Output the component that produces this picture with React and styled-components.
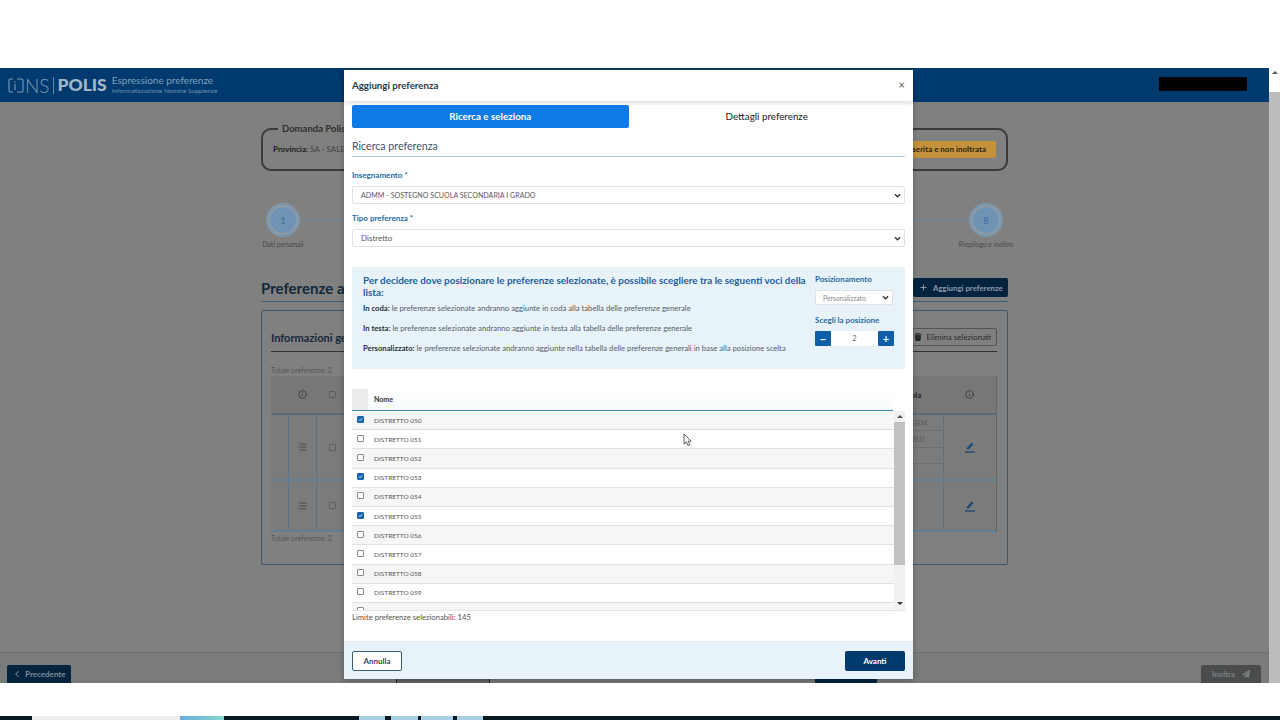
import styled, { createGlobalStyle } from "styled-components";
import { Plus, ChevronLeft, Menu, Info } from "lucide-react";
import { FaTrash, FaPaperPlane } from "react-icons/fa";

const FONT = `"Lato", "Liberation Sans", sans-serif`;

const CHEVRON = `url("data:image/svg+xml,%3Csvg xmlns='http://www.w3.org/2000/svg' viewBox='0 0 8 5'%3E%3Cpath d='M1 1l3 3 3-3' fill='none' stroke='%23333' stroke-width='1.5'/%3E%3C/svg%3E")`;
const TICK = `url("data:image/svg+xml,%3Csvg xmlns='http://www.w3.org/2000/svg' viewBox='0 0 8 8'%3E%3Cpath d='M1.5 4.2l1.8 1.8 3.4-3.8' fill='none' stroke='%23fff' stroke-width='1.3'/%3E%3C/svg%3E")`;

const GlobalStyle = createGlobalStyle`
  html, body {
    margin: 0;
    height: 100%;
    overflow: hidden;
    background: #ffffff;
    font-family: ${FONT};
  }
  * {
    box-sizing: border-box;
  }
  select, input, button {
    font-family: ${FONT};
  }
`;

const districts = ["050", "051", "052", "053", "054", "055", "056", "057", "058", "059", "060"];
const checkedDistricts = ["050", "053", "055"];

const steps = [
  { n: 1, label: "Dati personali" },
  { n: 2 },
  { n: 3 },
  { n: 4 },
  { n: 5 },
  { n: 6 },
  { n: 7 },
  { n: 8, label: "Riepilogo e inoltro" },
];

const notes = [
  { title: "In coda:", text: "le preferenze selezionate andranno aggiunte in coda alla tabella delle preferenze generale" },
  { title: "In testa:", text: "le preferenze selezionate andranno aggiunte in testa alla tabella delle preferenze generale" },
  {
    title: "Personalizzato:",
    text: "le preferenze selezionate andranno aggiunte nella tabella delle preferenze generali in base alla posizione scelta",
  },
];

const LogoMark = () => (
  <svg width="16" height="15" viewBox="0 0 16 15" fill="none" stroke="#7f9db8" strokeWidth="1.1">
    <path d="M5 1H2.5A1.5 1.5 0 0 0 1 2.5v10A1.5 1.5 0 0 0 2.5 14H5" />
    <path d="M9 1h4.5A1.5 1.5 0 0 1 15 2.5v10a1.5 1.5 0 0 1-1.5 1.5H9" />
    <path d="M7 6v6M7 3.2v1.2" />
  </svg>
);

const EditIcon = () => (
  <svg width="12" height="12" viewBox="0 0 12 12" fill="none" stroke="#1d4a73">
    <path d="M3.2 8.2L8.6 2.4" strokeWidth="2.4" />
    <path d="M1 11h10" strokeWidth="1.4" />
  </svg>
);

const Cursor = () => (
  <CursorMark width="9" height="14" viewBox="0 0 9 14">
    <path d="M1 1v10l2.4-2.2L5 12.6l1.8-.8-1.6-3.6h3z" fill="#ffffff" stroke="#333333" strokeWidth="0.8" />
  </CursorMark>
);

const App = () => {
  return (
    <Page>
      <GlobalStyle />
      <TopGap />
      <Frame>
        <Main>
          <Header>
            <Brand>
              <LogoMark />
              <BrandNs>NS</BrandNs>
              <BrandDivider />
              <BrandPolis>POLIS</BrandPolis>
              <BrandText>
                <BrandTitle>Espressione preferenze</BrandTitle>
                <BrandSub>Informatizzazione Nomine Supplenze</BrandSub>
              </BrandText>
            </Brand>
            <Redacted />
          </Header>

          <Content>
            <Summary>
              <SummaryLegend>Domanda Polis</SummaryLegend>
              <SummaryRow>
                <span>
                  <strong>Provincia:</strong> SA - SALERNO
                </span>
                <StatusChip>Domanda inserita e non inoltrata</StatusChip>
              </SummaryRow>
            </Summary>

            <Stepper>
              {steps.map((step, index) => (
                <StepGroup key={step.n} $last={index === steps.length - 1}>
                  <Step>
                    <StepCircle>{step.n}</StepCircle>
                    <StepLabel>{step.label}</StepLabel>
                  </Step>
                  {index < steps.length - 1 && <StepLine />}
                </StepGroup>
              ))}
            </Stepper>

            <SectionRow>
              <SectionTitle>Preferenze aggiunte</SectionTitle>
              <AddButton>
                <Plus size={9} strokeWidth={2.5} />
                Aggiungi preferenze
              </AddButton>
            </SectionRow>

            <Card>
              <CardHead>
                <CardTitle>Informazioni generali</CardTitle>
                <DeleteButton>
                  <FaTrash size={8} />
                  Elimina selezionati
                </DeleteButton>
              </CardHead>
              <TotalText $gap={12}>Totale preferenze: 2</TotalText>
              <BgTable>
                <BgHead>
                  <span />
                  <BgHeadCell>
                    <Info size={9} color="#333333" />
                  </BgHeadCell>
                  <BgHeadCell>
                    <BgCheck />
                  </BgHeadCell>
                  <span />
                  <BgHeadText>Scuola</BgHeadText>
                  <BgHeadCell>
                    <Info size={9} color="#333333" />
                  </BgHeadCell>
                </BgHead>
                <BgRow $height={66}>
                  <span />
                  <BgCell>
                    <Menu size={10} color="#444444" />
                  </BgCell>
                  <BgCell>
                    <BgCheck />
                  </BgCell>
                  <span />
                  <BgSubRows>
                    <BgSubRow>ERM</BgSubRow>
                    <BgSubRow>RUJ</BgSubRow>
                    <BgSubRow />
                    <BgSubRow />
                  </BgSubRows>
                  <BgCell>
                    <EditIcon />
                  </BgCell>
                </BgRow>
                <BgRow $height={51}>
                  <span />
                  <BgCell>
                    <Menu size={10} color="#444444" />
                  </BgCell>
                  <BgCell>
                    <BgCheck />
                  </BgCell>
                  <span />
                  <span />
                  <BgCell>
                    <EditIcon />
                  </BgCell>
                </BgRow>
              </BgTable>
              <TotalText $gap={0}>Totale preferenze: 2</TotalText>
            </Card>
          </Content>

          <Footer>
            <BackButton>
              <ChevronLeft size={10} strokeWidth={2.5} />
              Precedente
            </BackButton>
            <FooterCenter>
              <GhostButton />
              <DarkButton />
            </FooterCenter>
            <SendButton>
              Inoltra
              <FaPaperPlane size={8} />
            </SendButton>
          </Footer>
        </Main>

        <ScrollBar $width={11}>
          <ScrollArrow $height={24} $bg="#ffffff" />
          <ScrollTrack $bg="#bcbcbc" />
        </ScrollBar>

        <Modal>
          <ModalHeader>
            <ModalTitle>Aggiungi preferenza</ModalTitle>
            <CloseButton>×</CloseButton>
          </ModalHeader>

          <ModalBody>
            <Tabs>
              <Tab $active>Ricerca e seleziona</Tab>
              <Tab>Dettagli preferenze</Tab>
            </Tabs>

            <FormTitle>Ricerca preferenza</FormTitle>

            <FieldLabel>Insegnamento *</FieldLabel>
            <Select defaultValue="admm" $size={7.1}>
              <option value="admm">ADMM - SOSTEGNO SCUOLA SECONDARIA I GRADO</option>
            </Select>
            <FieldLabel $gap={9}>Tipo preferenza *</FieldLabel>
            <Select defaultValue="distretto" $size={8}>
              <option value="distretto">Distretto</option>
            </Select>

            <InfoBox>
              <InfoText>
                <InfoTitle>
                  Per decidere dove posizionare le preferenze selezionate, è possibile scegliere tra le seguenti voci
                  della lista:
                </InfoTitle>
                {notes.map((note) => (
                  <InfoNote key={note.title}>
                    <strong>{note.title}</strong> {note.text}
                  </InfoNote>
                ))}
              </InfoText>
              <InfoSide>
                <SideLabel>Posizionamento</SideLabel>
                <SideSelect defaultValue="personalizzato">
                  <option value="personalizzato">Personalizzato</option>
                </SideSelect>
                <SideLabel $gap={10}>Scegli la posizione</SideLabel>
                <Counter>
                  <CounterButton>−</CounterButton>
                  <CounterValue>2</CounterValue>
                  <CounterButton>+</CounterButton>
                </Counter>
              </InfoSide>
            </InfoBox>

            <ListHead>
              <ListHeadCheck />
              <ListHeadName>Nome</ListHeadName>
            </ListHead>
            <ListWrap>
              <List>
                {districts.map((code) => (
                  <ListRow key={code}>
                    <RowCheck type="checkbox" readOnly checked={checkedDistricts.includes(code)} />
                    <RowName>DISTRETTO {code}</RowName>
                  </ListRow>
                ))}
              </List>
              <ScrollBar $width={11}>
                <ScrollArrow $height={11} $bg="#f1f1f1" />
                <ScrollTrack $bg="#f1f1f1">
                  <ScrollThumb $height={143} />
                </ScrollTrack>
                <ScrollArrow $height={13} $bg="#f1f1f1" $down />
              </ScrollBar>
            </ListWrap>
            <LimitText>Limite preferenze selezionabili: 145</LimitText>
          </ModalBody>

          <ModalFooter>
            <CancelButton>Annulla</CancelButton>
            <NextButton>Avanti</NextButton>
          </ModalFooter>
          <Cursor />
        </Modal>
      </Frame>
      <Taskbar>
        <TaskSearch />
        <TaskAccent />
        <TaskIcon $width={26} $left={135} />
        <TaskIcon $width={27} $left={6} />
        <TaskIcon $width={32} $left={3} />
        <TaskIcon $width={26} $left={4} />
      </Taskbar>
    </Page>
  );
};

const Page = styled.div`
  width: 1280px;
  height: 720px;
  display: flex;
  flex-direction: column;
  background: #ffffff;
  overflow: hidden;
`;

const TopGap = styled.div`
  height: 68px;
  flex: none;
`;

const Frame = styled.div`
  position: relative;
  height: 615px;
  flex: none;
  display: flex;
  background: #808080;
  overflow: hidden;
`;

const Main = styled.div`
  flex: 1;
  min-width: 0;
  display: flex;
  flex-direction: column;
`;

const Header = styled.header`
  height: 34px;
  flex: none;
  display: flex;
  align-items: center;
  justify-content: space-between;
  padding: 0 22px 0 8px;
  background: #003a6e;
`;

const Brand = styled.div`
  display: flex;
  align-items: center;
`;

const BrandNs = styled.span`
  margin-left: 1px;
  font-size: 19px;
  font-weight: 300;
  line-height: 1;
  color: #7f9db8;
`;

const BrandDivider = styled.span`
  width: 1px;
  height: 17px;
  margin: 0 4px 0 3px;
  background: #5f85a6;
`;

const BrandPolis = styled.span`
  font-size: 17.5px;
  font-weight: 900;
  line-height: 1;
  color: #a3b7c8;
`;

const BrandText = styled.div`
  display: flex;
  flex-direction: column;
  margin-left: 5px;
  margin-bottom: 1px;
`;

const BrandTitle = styled.span`
  font-size: 10px;
  line-height: 12px;
  color: #7fa0bb;
`;

const BrandSub = styled.span`
  font-size: 6.5px;
  line-height: 9px;
  color: #6f92af;
`;

const Redacted = styled.div`
  width: 88px;
  height: 14px;
  margin-bottom: 2px;
  background: #000000;
`;

const Content = styled.main`
  flex: 1;
  min-height: 0;
  width: 747px;
  margin: 0 auto;
  padding-top: 21px;
`;

const Summary = styled.fieldset`
  margin: 0;
  padding: 0 10px;
  height: 48px;
  border: 2px solid #3a3a3a;
  border-radius: 10px;
`;

const SummaryLegend = styled.legend`
  margin-left: 5px;
  padding: 0 4px;
  font-size: 9.5px;
  font-weight: 700;
  line-height: 11px;
  color: #2f2f2f;
`;

const SummaryRow = styled.div`
  display: flex;
  align-items: center;
  justify-content: space-between;
  height: 30px;
  font-size: 8px;
  color: #444444;

  strong {
    color: #1c1c1c;
  }
`;

const StatusChip = styled.span`
  display: flex;
  align-items: center;
  height: 17px;
  padding: 0 10px;
  font-size: 8px;
  font-weight: 700;
  color: #2d2410;
  background: #c3923b;
  border-radius: 2px;
`;

const Stepper = styled.div`
  display: flex;
  margin-top: 32px;
`;

const StepGroup = styled.div`
  display: flex;
  flex: ${(props) => (props.$last ? "none" : 1)};
`;

const Step = styled.div`
  width: 44px;
  flex: none;
  display: flex;
  flex-direction: column;
  align-items: center;
`;

const StepCircle = styled.div`
  width: 34px;
  height: 34px;
  display: flex;
  align-items: center;
  justify-content: center;
  font-size: 9px;
  color: #3e6f9c;
  background: #6f93b2;
  border: 2px solid #7f97ab;
  border-radius: 50%;
  box-shadow: inset 0 0 0 2px #8f9ca6;
`;

const StepLabel = styled.span`
  margin-top: 2px;
  font-size: 6.8px;
  line-height: 10px;
  white-space: nowrap;
  color: #4a4a4a;
`;

const StepLine = styled.div`
  flex: 1;
  height: 1px;
  margin: 17px -5px 0;
  background: #6c8aa3;
`;

const SectionRow = styled.div`
  display: flex;
  align-items: flex-start;
  justify-content: space-between;
  height: 24px;
  margin-top: 29px;
  border-bottom: 1px solid #3f5f78;
`;

const SectionTitle = styled.h2`
  margin: 0;
  font-size: 15px;
  font-weight: 700;
  line-height: 20px;
  color: #12283c;
`;

const AddButton = styled.button`
  display: flex;
  align-items: center;
  gap: 5px;
  width: 95px;
  height: 19px;
  padding: 0 0 0 6px;
  font-size: 7.8px;
  font-weight: 700;
  color: #8d9cab;
  background: #04233f;
  border: 0;
  border-radius: 2px;
`;

const Card = styled.section`
  height: 255px;
  margin-top: 8px;
  padding: 17px 10px 0 9px;
  border: 1px solid #3f5568;
  border-radius: 2px;
`;

const CardHead = styled.div`
  display: flex;
  align-items: center;
  justify-content: space-between;
  height: 24px;
  border-bottom: 1px solid #333333;
  padding-bottom: 5px;
`;

const CardTitle = styled.h3`
  margin: 0;
  font-size: 11px;
  font-weight: 700;
  color: #13283a;
`;

const DeleteButton = styled.button`
  display: flex;
  align-items: center;
  gap: 4px;
  height: 18px;
  padding: 0 5px;
  font-size: 8px;
  color: #2a2a2a;
  background: #808080;
  border: 1px solid #555555;
  border-radius: 2px;
`;

const TotalText = styled.div`
  height: 12px;
  margin-top: ${(props) => props.$gap}px;
  font-size: 7px;
  line-height: 12px;
  color: #555555;
`;

const BgTable = styled.div`
  border-right: 1px solid #666666;
`;

const BgHead = styled.div`
  display: grid;
  grid-template-columns: 17px 28px 32px 1fr 45px 53px;
  align-items: center;
  height: 39px;
  background: #777777;
  border-bottom: 2px solid #5b6d7b;
`;

const BgHeadCell = styled.div`
  display: flex;
  justify-content: center;
`;

const BgHeadText = styled.span`
  font-size: 8px;
  font-weight: 700;
  color: #222222;
`;

const BgRow = styled.div`
  display: grid;
  grid-template-columns: 17px 28px 32px 1fr 45px 53px;
  height: ${(props) => props.$height}px;
  background: #7b7b7b;
  border-bottom: 2px solid #5f7f96;
`;

const BgCell = styled.div`
  display: flex;
  align-items: center;
  justify-content: center;
  border-left: 1px solid #55738a;
`;

const BgCheck = styled.span`
  width: 7px;
  height: 7px;
  border: 1px solid #5e5e5e;
  border-radius: 1px;
`;

const BgSubRows = styled.div`
  display: flex;
  flex-direction: column;
`;

const BgSubRow = styled.div`
  flex: 1;
  display: flex;
  align-items: center;
  padding-left: 14px;
  font-size: 7px;
  color: #5a5a5a;
  border-bottom: 1px solid #6f6f6f;

  &:last-child {
    border-bottom: 0;
  }
`;

const Footer = styled.footer`
  height: 31px;
  flex: none;
  display: flex;
  justify-content: space-between;
  padding: 12px 8px 0 7px;
  background: #7a7b7b;
  border-top: 1px solid #6f7070;
`;

const BackButton = styled.button`
  display: flex;
  align-items: center;
  gap: 3px;
  width: 64px;
  height: 24px;
  padding: 0 0 6px 5px;
  font-size: 8px;
  font-weight: 700;
  color: #7f8c99;
  background: #04233f;
  border: 0;
  border-radius: 2px;
`;

const FooterCenter = styled.div`
  display: flex;
  gap: 325px;
`;

const GhostButton = styled.div`
  width: 94px;
  height: 24px;
  background: #666666;
  border: 1px solid #222222;
`;

const DarkButton = styled.div`
  width: 62px;
  height: 24px;
  background: #04233f;
`;

const SendButton = styled.button`
  display: flex;
  align-items: center;
  justify-content: center;
  gap: 7px;
  width: 60px;
  height: 24px;
  padding: 0 0 6px;
  font-size: 7.8px;
  font-weight: 700;
  color: #7e8282;
  background: #4a4c4d;
  border: 0;
  border-radius: 2px;
`;

const ScrollBar = styled.div`
  width: ${(props) => props.$width}px;
  flex: none;
  display: flex;
  flex-direction: column;
`;

const ScrollArrow = styled.div`
  height: ${(props) => props.$height}px;
  flex: none;
  display: flex;
  align-items: center;
  justify-content: center;
  background: ${(props) => props.$bg};

  &::before {
    content: "";
    border-left: 3px solid transparent;
    border-right: 3px solid transparent;
    border-bottom: ${(props) => (props.$down ? "0" : "3px solid #555555")};
    border-top: ${(props) => (props.$down ? "3px solid #333333" : "0")};
    margin-bottom: ${(props) => (props.$height > 20 ? "16px" : "0")};
  }
`;

const ScrollTrack = styled.div`
  flex: 1;
  min-height: 0;
  background: ${(props) => props.$bg};
`;

const ScrollThumb = styled.div`
  height: ${(props) => props.$height}px;
  background: #c1c1c1;
`;

const Modal = styled.div`
  position: absolute;
  top: 1px;
  left: 344px;
  width: 569px;
  height: 610px;
  display: flex;
  flex-direction: column;
  background: #ffffff;
  border-top: 1px solid #1c3d57;
  box-shadow: 0 2px 6px rgba(0, 0, 0, 0.25);
`;

const ModalHeader = styled.div`
  height: 31px;
  flex: none;
  display: flex;
  align-items: center;
  justify-content: space-between;
  padding: 0 8px 2px;
  box-shadow: 0 2px 5px rgba(0, 0, 0, 0.14);
`;

const ModalTitle = styled.h2`
  margin: 0;
  font-size: 9.7px;
  font-weight: 700;
  color: #25394a;
`;

const CloseButton = styled.span`
  font-size: 11px;
  line-height: 1;
  color: #555555;
`;

const ModalBody = styled.div`
  flex: 1;
  min-height: 0;
  padding: 4px 8px 0;
`;

const Tabs = styled.div`
  display: grid;
  grid-template-columns: 1fr 1fr;
  height: 23px;
`;

const Tab = styled.div`
  display: flex;
  align-items: center;
  justify-content: center;
  padding-bottom: 1px;
  font-size: 9.8px;
  font-weight: ${(props) => (props.$active ? 700 : 400)};
  color: ${(props) => (props.$active ? "#ffffff" : "#222222")};
  background: ${(props) => (props.$active ? "#0d7ae6" : "#ffffff")};
  border-radius: 2px;
`;

const FormTitle = styled.h3`
  height: 29px;
  margin: 0;
  padding-top: 11px;
  font-size: 10.6px;
  font-weight: 400;
  line-height: 14px;
  color: #3c5468;
  border-bottom: 1px solid #a9d3da;
`;

const FieldLabel = styled.label`
  display: block;
  height: 11px;
  margin-top: ${(props) => props.$gap || 13}px;
  margin-bottom: 5px;
  font-size: 8px;
  font-weight: 700;
  line-height: 11px;
  color: #1d6aa5;
`;

const Select = styled.select`
  display: block;
  width: 100%;
  height: 18px;
  padding: 0 8px;
  font-size: ${(props) => props.$size}px;
  color: #5a5a5a;
  appearance: none;
  background: #ffffff ${CHEVRON} no-repeat right 3px center / 7px 5px;
  border: 1px solid #e2e2e2;
  border-radius: 2px;
`;

const InfoBox = styled.div`
  display: flex;
  justify-content: space-between;
  height: 102px;
  margin-top: 20px;
  padding: 7px 11px 0;
  background: #e8f2f9;
`;

const InfoText = styled.div`
  width: 444px;
`;

const InfoTitle = styled.h4`
  margin: 0 0 5px;
  font-size: 9.9px;
  font-weight: 700;
  line-height: 12px;
  color: #1d5f9c;
`;

const InfoNote = styled.p`
  height: 20px;
  margin: 0;
  font-size: 7.7px;
  line-height: 11px;
  color: #55606a;

  strong {
    color: #27323c;
  }
`;

const InfoSide = styled.div`
  width: 79px;
`;

const SideLabel = styled.div`
  height: 11px;
  margin-top: ${(props) => props.$gap || 0}px;
  margin-bottom: 5px;
  font-size: 8px;
  font-weight: 700;
  line-height: 11px;
  color: #2a6aa0;
`;

const SideSelect = styled.select`
  display: block;
  width: 78px;
  height: 15px;
  padding: 0 7px;
  font-size: 6.8px;
  color: #8a8a8a;
  appearance: none;
  background: #ffffff ${CHEVRON} no-repeat right 3px center / 7px 5px;
  border: 1px solid #e2e2e2;
`;

const Counter = styled.div`
  display: flex;
  height: 15px;
`;

const CounterButton = styled.button`
  width: 16px;
  padding: 0;
  font-size: 11px;
  font-weight: 700;
  line-height: 1;
  color: #ffffff;
  background: #0f5fa8;
  border: 0;
  border-radius: 1px;
`;

const CounterValue = styled.div`
  flex: 1;
  display: flex;
  align-items: center;
  justify-content: center;
  font-size: 7.5px;
  color: #666666;
  background: #ffffff;
`;

const ListHead = styled.div`
  display: flex;
  width: 541px;
  height: 22px;
  margin-top: 20px;
  background: linear-gradient(#ffffff, #f7fafc);
  border-bottom: 1px solid #3d8ab5;
`;

const ListHeadCheck = styled.div`
  width: 16px;
  background: #ececec;
`;

const ListHeadName = styled.div`
  padding-left: 6px;
  font-size: 7px;
  font-weight: 700;
  line-height: 20px;
  color: #333333;
`;

const ListWrap = styled.div`
  display: flex;
  height: 200px;
  border-bottom: 1px solid #e5e5e5;
`;

const List = styled.div`
  flex: 1;
  min-width: 0;
  overflow: hidden;
`;

const ListRow = styled.label`
  display: flex;
  align-items: center;
  height: 19.2px;
  background: #ffffff;
  border-bottom: 1px solid #e0e0e0;

  &:nth-child(odd) {
    background: #f6f6f6;
  }
`;

const RowCheck = styled.input`
  width: 7px;
  height: 7px;
  margin: 0 0 2px 5px;
  appearance: none;
  background: #ffffff;
  border: 1px solid #8a8a8a;
  border-radius: 1px;

  &:checked {
    background: #1565b5 ${TICK} no-repeat center / 100%;
    border-color: #1565b5;
  }
`;

const RowName = styled.span`
  margin-left: 10px;
  font-size: 6.5px;
  color: #555555;
`;

const LimitText = styled.div`
  margin-top: 1px;
  font-size: 7.7px;
  line-height: 11px;
  color: #555555;
`;

const ModalFooter = styled.div`
  height: 38px;
  flex: none;
  display: flex;
  align-items: center;
  justify-content: space-between;
  padding: 0 8px;
  background: #e8f2f9;
  border-top: 1px solid #eeeeee;
`;

const CancelButton = styled.button`
  width: 50px;
  height: 20px;
  padding: 0;
  font-size: 8px;
  font-weight: 700;
  color: #3b4a55;
  background: #ffffff;
  border: 1px solid #3a5a70;
  border-radius: 2px;
`;

const NextButton = styled.button`
  width: 60px;
  height: 20px;
  padding: 0;
  font-size: 8px;
  font-weight: 700;
  color: #ffffff;
  background: #003a6e;
  border: 0;
  border-radius: 2px;
`;

const CursorMark = styled.svg`
  position: absolute;
  top: 363px;
  left: 339px;
`;

const Taskbar = styled.div`
  height: 4px;
  margin-top: auto;
  flex: none;
  display: flex;
  padding-left: 32px;
  background: #0a1a22;
`;

const TaskSearch = styled.div`
  width: 148px;
  background: #eeeeee;
`;

const TaskAccent = styled.div`
  width: 44px;
  background: linear-gradient(90deg, #6aaee0, #86d6d0);
`;

const TaskIcon = styled.div`
  width: ${(props) => props.$width}px;
  margin-left: ${(props) => props.$left}px;
  background: #a9cfe6;
`;

export default App;
